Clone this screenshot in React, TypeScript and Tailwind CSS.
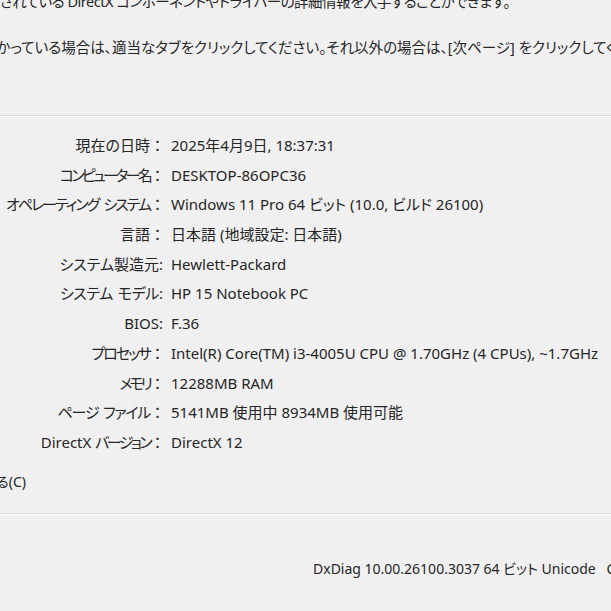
type Row = { words: string[]; pre?: string; tr: string; colon: 'full' | 'half'; value: string }

// per-label tracking approximates the narrow proportional kana of the original UI font
const rows: Row[] = [
  { words: ['現在の日時'], tr: 'tracking-normal', colon: 'full', value: '2025年4月9日, 18:37:31' },
  { words: ['コンピューター名'], tr: 'tracking-[-2.7px]', colon: 'full', value: 'DESKTOP-86OPC36' },
  { words: ['オペレーティング', 'システム'], tr: 'tracking-[-2px]', colon: 'full', value: 'Windows 11 Pro 64 ビット (10.0, ビルド 26100)' },
  { words: ['言語'], tr: 'tracking-normal', colon: 'full', value: '日本語 (地域設定: 日本語)' },
  { words: ['システム製造元'], tr: 'tracking-normal', colon: 'half', value: 'Hewlett-Packard' },
  { words: ['システム', 'モデル'], tr: 'tracking-[-0.4px]', colon: 'half', value: 'HP 15 Notebook PC' },
  { words: ['BIOS'], tr: 'tracking-normal', colon: 'half', value: 'F.36' },
  { words: ['プロセッサ'], tr: 'tracking-[-2px]', colon: 'full', value: 'Intel(R) Core(TM) i3-4005U CPU @ 1.70GHz (4 CPUs), ~1.7GHz' },
  { words: ['メモリ'], tr: 'tracking-[-3px]', colon: 'full', value: '12288MB RAM' },
  { words: ['ページ', 'ファイル'], tr: 'tracking-[-1.3px]', colon: 'full', value: '5141MB 使用中 8934MB 使用可能' },
  { words: ['バージョン'], pre: 'DirectX ', tr: 'tracking-[-2.6px]', colon: 'full', value: 'DirectX 12' },
]

export default function App() {
  return (
    <div
      className="w-[611px] h-[611px] overflow-hidden bg-[#f0f0f0] text-[#262626] [font-feature-settings:'palt']"
      style={{ fontFamily: '"Noto Sans", "Noto Sans CJK JP", sans-serif' }}
    >
      {/* intro text */}
      <div className="h-[115px] overflow-hidden text-[14.5px] whitespace-nowrap">
        <div className="w-[510px] h-[20px] -mt-[9px] leading-[20px] flex justify-end overflow-hidden tracking-[-0.5px]">
          このツールは、システムにインストールされている DirectX コンポーネントやドライバーの詳細情報を入手することができます。
        </div>
        <div className="mt-[26px] h-[20px] leading-[20px] -ml-[196px]">
          どのカテゴリに問題があるかわかっている場合は、適当なタブをクリックしてください。それ以外の場合は、[次ページ] をクリックしてください。
        </div>
      </div>

      {/* separator */}
      <div className="h-[1px] bg-[#dadada]" />
      <div className="h-[1px] bg-[#fafafa]" />

      {/* system info */}
      <div className="mt-[14px] grid grid-cols-[165px_1fr] gap-x-[6px] text-[15px] whitespace-nowrap">
        {rows.map((r) => (
          <div key={r.words.join(' ')} className="contents">
            <div className="h-[29.7px] leading-[29.7px] text-right">
              {r.pre}
              {r.words.map((w, i) => (
                <span key={w}>
                  {i > 0 && <span className="inline-block w-[5px]" />}
                  <span className={r.tr}>{w}</span>
                </span>
              ))}
              {r.colon === 'full' ? (
                <span className="[font-feature-settings:normal]">：</span>
              ) : (
                <span className="pr-[2px]">:</span>
              )}
            </div>
            <div className="h-[29.7px] leading-[29.7px]">{r.value}</div>
          </div>
        ))}
      </div>

      {/* whql checkbox label, clipped */}
      <div className="mt-[14px] w-[26px] h-[20px] overflow-hidden flex justify-end text-[14px] leading-[20px] whitespace-nowrap">
        WHQL のデジタル署名をチェックする(C)
      </div>

      <div className="mt-[21px] h-[1px] bg-[#dadada]" />
      <div className="h-[1px] bg-[#fafafa]" />

      {/* footer */}
      <div className="mt-[44px] pl-[313px] h-[20px] overflow-hidden whitespace-nowrap text-[14px] leading-[20px]">
        DxDiag 10.00.26100.3037 64 ビット Unicode&nbsp;&nbsp;&nbsp;Copyright © Microsoft. All rights reserved.
      </div>
    </div>
  )
}
